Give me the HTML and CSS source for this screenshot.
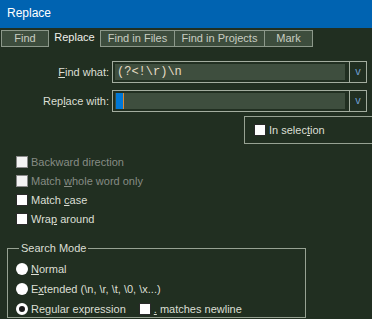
FILE: index.html
```html
<!DOCTYPE html>
<html lang="en">
<head>
  <meta charset="UTF-8">
  <title>Replace</title>
  <link rel="stylesheet" href="styles.css">
</head>
<body>
  <div class="titlebar">Replace</div>

  <div class="tabs">
    <div class="tab tab-find">Find</div>
    <div class="tab tab-active">Replace</div>
    <div class="tab tab-files">Find in Files</div>
    <div class="tab tab-projects">Find in Projects</div>
    <div class="tab tab-mark">Mark</div>
  </div>

  <div class="form">
    <div class="field-row">
      <label class="field-label"><u>F</u>ind what:</label>
      <div class="combo">
        <div class="combo-input"><span class="mono">(?&lt;!\r)\n</span></div>
        <div class="combo-btn">v</div>
      </div>
    </div>
    <div class="field-row">
      <label class="field-label">Rep<u>l</u>ace with:</label>
      <div class="combo">
        <div class="combo-input"><span class="caret"></span></div>
        <div class="combo-btn">v</div>
      </div>
    </div>

    <div class="selection-box">
      <span class="check"></span>
      <span>In selec<u>t</u>ion</span>
    </div>

    <div class="options">
      <div class="option disabled"><span class="check"></span><span>Backward direction</span></div>
      <div class="option disabled"><span class="check"></span><span>Match <u>w</u>hole word only</span></div>
      <div class="option"><span class="check"></span><span>Match <u>c</u>ase</span></div>
      <div class="option"><span class="check"></span><span>Wra<u>p</u> around</span></div>
    </div>

    <fieldset class="mode">
      <legend>Search Mode</legend>
      <div class="option"><span class="radio"></span><span><u>N</u>ormal</span></div>
      <div class="option"><span class="radio"></span><span>E<u>x</u>tended (\n, \r, \t, \0, \x...)</span></div>
      <div class="option">
        <span class="radio checked"></span><span>Re<u>g</u>ular expression</span>
        <span class="check newline-check"></span><span><u>.</u> matches newline</span>
      </div>
    </fieldset>
  </div>
</body>
</html>
```

FILE: styles.css
```css
body {
  margin: 0;
  background: #212f21;
  color: #dcdfd4;
  font-family: 'Liberation Sans', Arial, sans-serif;
  font-size: 11px;
  width: 372px;
  height: 319px;
  overflow: hidden;
}
u {
  text-underline-offset: 1px;
}
.titlebar {
  height: 28px;
  line-height: 27px;
  background: #0063b1;
  color: #fff;
  font-size: 12px;
  padding-left: 7px;
}
.tabs {
  display: flex;
  margin-top: 2px;
  padding-left: 1px;
  height: 17px;
}
.tab {
  box-sizing: border-box;
  height: 17px;
  line-height: 15px;
  text-align: center;
  background: #3d4d3d;
  border: 1px solid #8c988a;
  color: #c9cec2;
}
.tab-find { width: 48px; }
.tab-active {
  width: 51px;
  background: none;
  border-color: transparent;
  color: #f0f0ea;
  line-height: 13px;
}
.tab-files { width: 75px; }
.tab-projects { width: 90px; border-left: none; }
.tab-mark { width: 48px; border-left: none; }
.form {
  padding-top: 14px;
}
.field-row {
  display: flex;
  align-items: center;
  height: 22px;
  margin-bottom: 7px;
}
.field-label {
  width: 109px;
  text-align: right;
  padding-right: 3px;
}
.combo {
  display: flex;
  height: 22px;
}
.combo-input {
  box-sizing: border-box;
  width: 237px;
  height: 22px;
  border: 1px solid #a3ad9f;
  border-right: none;
  padding: 2px;
  background: #212f21;
  display: flex;
}
.combo-input .mono,
.combo-input .caret {
  flex: 1;
  background: #3e4e3e;
  margin-right: 2px;
}
.mono {
  font-family: 'Liberation Mono', monospace;
  font-size: 12px;
  color: #e6dcc4;
  line-height: 16px;
  padding-left: 2px;
}
.caret {
  position: relative;
}
.caret::before {
  content: "";
  position: absolute;
  left: 1px;
  top: 0;
  width: 7px;
  height: 16px;
  background: #0078d7;
  border-right: 1px solid #e08a30;
}
.combo-btn {
  box-sizing: border-box;
  width: 18px;
  height: 22px;
  border: 1px solid #a3ad9f;
  color: #6f9fd0;
  text-align: center;
  line-height: 18px;
  font-size: 11px;
}
.selection-box {
  margin: -3px 0 0 244px;
  height: 28px;
  box-sizing: border-box;
  border: 1px solid #97a293;
  border-right: none;
  display: flex;
  align-items: center;
  padding-left: 9px;
}
.check {
  display: inline-block;
  box-sizing: border-box;
  width: 12px;
  height: 12px;
  background: #fff;
  border: 1px solid #2a2a2a;
  margin-right: 3px;
  flex: none;
}
.options {
  padding: 8px 0 0 16px;
}
.option {
  display: flex;
  align-items: center;
  height: 19px;
  white-space: pre;
}
.option.disabled {
  color: #868c84;
}
.option.disabled .check {
  background: #f4f4f4;
  border-color: #8a8a8a;
}
.mode {
  margin: 14px 0 0 7px;
  width: 299px;
  box-sizing: border-box;
  height: 76px;
  border: 1px solid #97a293;
  padding: 5px 0 0 8px;
}
.mode legend {
  padding: 0 2px;
  margin-left: 3px;
}
.mode .option {
  height: 20px;
  white-space: normal;
}
.radio {
  display: inline-block;
  width: 12px;
  height: 12px;
  border-radius: 50%;
  background: #fff;
  margin-right: 3px;
  box-sizing: border-box;
  flex: none;
}
.radio.checked {
  border: 3px solid #fff;
  background: #1a1a1a;
}
.newline-check {
  margin-left: 13px;
}
```
